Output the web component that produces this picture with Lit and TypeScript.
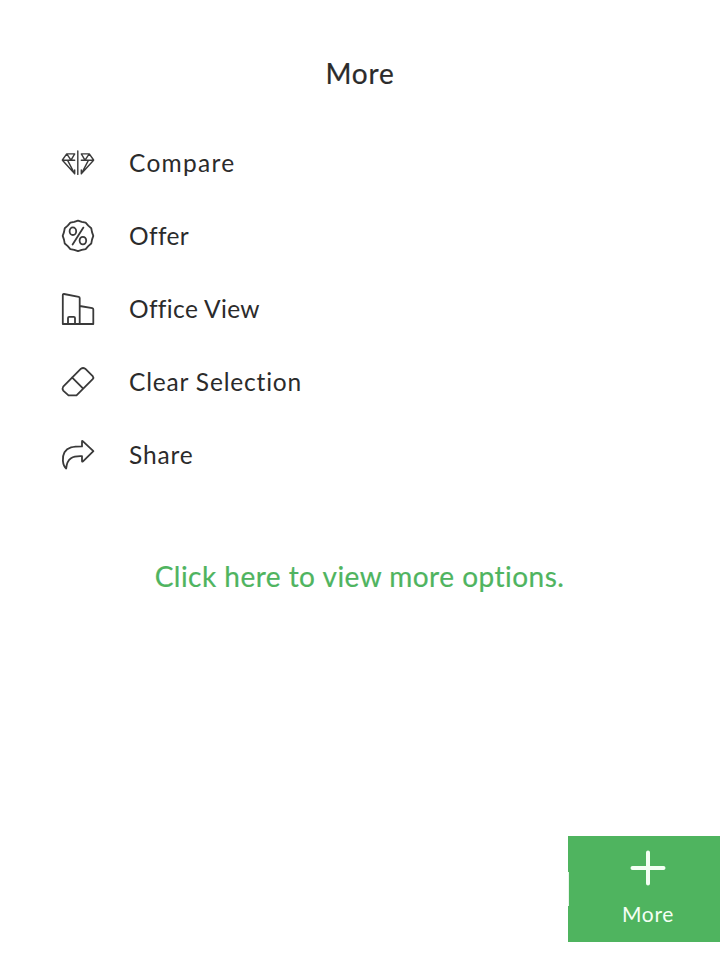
import { LitElement, html, css, svg } from "lit";
import { customElement } from "lit/decorators.js";

const sealPoints = Array.from({ length: 24 }, (_, i) => {
  const a = (i * Math.PI) / 12;
  const r = i % 2 ? 14.5 : 15.3;
  return `${(18 + r * Math.sin(a)).toFixed(2)},${(17.9 - r * Math.cos(a)).toFixed(2)}`;
}).join(" ");

const halfGem = svg`<path d="M2.4 15 6.7 8.9H14.7L11 15.2 6.9 9.1M2.4 15.2H14.7M2.4 15.2 14.7 28.8V25M7.6 15.4 14.7 28.8"/>`;

const items = [
  {
    label: "Compare",
    cls: "compare",
    icon: svg`<g stroke-width="1.4">${halfGem}<g transform="translate(36 0) scale(-1 1)">${halfGem}</g><path d="M17.8 6V29.4"/></g>`,
  },
  {
    label: "Offer",
    cls: "offer",
    icon: svg`<polygon points=${sealPoints}/><ellipse cx="12.9" cy="13.2" rx="3.3" ry="3.8"/><ellipse cx="22.9" cy="22.6" rx="3.3" ry="3.8"/><path d="M23.4 9.6 12.6 26.6"/>`,
  },
  {
    label: "Office View",
    cls: "office",
    icon: svg`<path d="M2.8 33V3.9Q2.8 2.8 4 3L18.8 5.8Q19.7 6 19.7 7V33M19.7 15 32.3 17.2Q33.3 17.4 33.3 18.4V33H2.8M8 32.5V27Q8 25.8 9.2 25.8H13.8Q15 25.8 15 27V32.5"/>`,
  },
  {
    label: "Clear Selection",
    cls: "clear",
    icon: svg`<path d="M21 4.7Q23 3.3 25.2 4.7L32.7 12.2Q34 13.7 32.7 15.2L16.5 31.4H8.5L3.2 26.6Q1.9 24.7 3.2 22.6ZM12 13.4 23.2 24.6"/>`,
  },
  {
    label: "Share",
    cls: "share",
    icon: svg`<path d="M22 4.7Q22 3.4 23 4.3L33.4 14.2 23 24.4Q22 25.2 22 24V19.2C13 18.8 7 20.9 6.2 31.5 2.4 28.3 1.8 19.9 4.5 15.2 7.5 10.2 13 9.5 22 9.4Z"/>`,
  },
];

@customElement("app-root")
export class AppRoot extends LitElement {
  static styles = css`
    :host {
      display: flex;
      flex-direction: column;
      height: 958px;
      box-sizing: border-box;
      padding: 53px 0 16px;
      background: #fff;
      color: #2b2b2b;
      font-family: Lato, "Liberation Sans", sans-serif;
      font-variant-ligatures: none;
    }
    h1 {
      margin: 0;
      height: 73px;
      font-size: 28px;
      line-height: 40px;
      font-weight: 400;
      text-align: center;
      letter-spacing: 0.8px;
      -webkit-text-stroke: 0.2px;
    }
    ul {
      list-style: none;
      margin: 0;
      padding: 0 0 0 60px;
    }
    li {
      display: flex;
      align-items: center;
      height: 73px;
      gap: 33px;
      font-size: 24.5px;
      line-height: 36px;
    }
    .icon {
      width: 36px;
      height: 37px;
      margin-top: 2px;
      fill: none;
      stroke: #3a3a3a;
      stroke-width: 1.8;
      stroke-linejoin: round;
      stroke-linecap: round;
    }
    .compare { letter-spacing: 1.3px; }
    .offer { letter-spacing: 0.4px; }
    .office { letter-spacing: 0.37px; }
    .clear { letter-spacing: 0.82px; }
    .share { letter-spacing: 0.85px; }
    .hint {
      margin: 65px 0 0;
      padding-right: 1px;
      font-size: 28px;
      line-height: 40px;
      color: #4fb45f;
      text-align: center;
      letter-spacing: 0.48px;
      -webkit-text-stroke: 0.2px;
    }
    .more {
      position: relative;
      display: flex;
      flex-direction: column;
      align-items: center;
      box-sizing: border-box;
      width: 152px;
      height: 106px;
      margin: auto 0 0 auto;
      padding: 14px 0 0 8px;
      border: 0;
      background: #4fb45f;
      color: #f4fff4;
      font: 400 21px/30px Lato, sans-serif;
      letter-spacing: 0.7px;
    }
    .more::before {
      content: "";
      position: absolute;
      left: 0;
      top: 36px;
      width: 1px;
      height: 34px;
      background: #e8f6ea;
    }
    .plus {
      width: 36px;
      height: 36px;
      margin-bottom: 13px;
      stroke: #f4fff4;
      stroke-width: 4;
      stroke-linecap: round;
    }
  `;

  render() {
    return html`
      <h1>More</h1>
      <ul>
        ${items.map(
          (it) => html`<li>
            <svg class="icon" viewBox="0 0 36 37">${it.icon}</svg>
            <span class=${it.cls}>${it.label}</span>
          </li>`
        )}
      </ul>
      <p class="hint">Click here to view more options.</p>
      <button class="more">
        <svg class="plus" viewBox="0 0 36 36"><path d="M18 2.5V33.5M2.5 18H33.5" /></svg>
        <span>More</span>
      </button>
    `;
  }
}
